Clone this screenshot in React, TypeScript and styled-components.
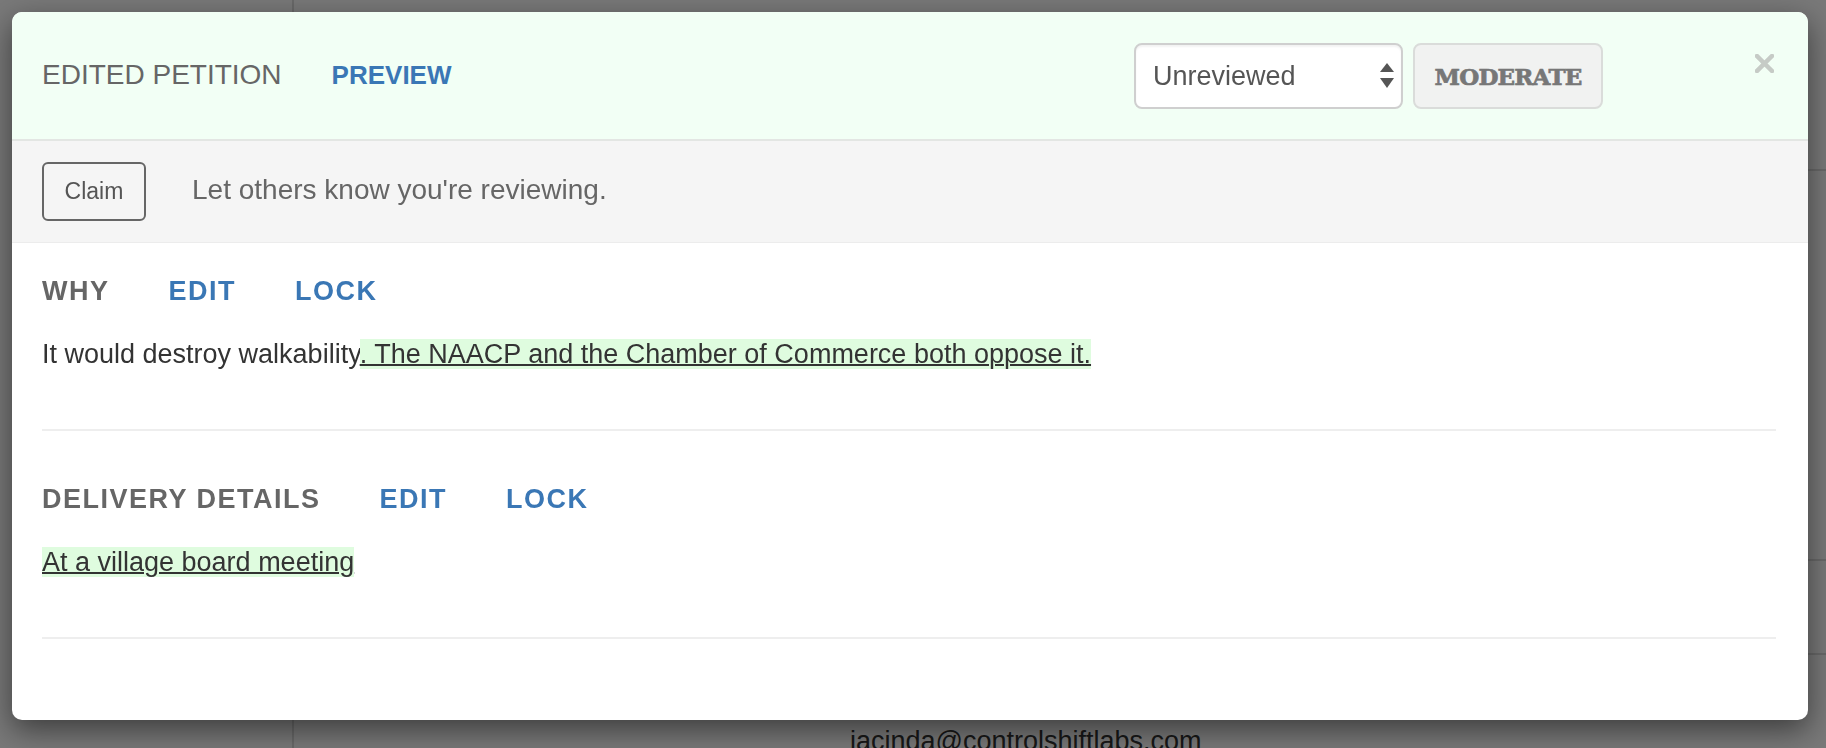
import React from "react";
import styled, { createGlobalStyle } from "styled-components";

const GlobalStyle = createGlobalStyle`
  html, body {
    margin: 0;
    padding: 0;
  }
  body {
    width: 1826px;
    height: 748px;
    overflow: hidden;
    background: #fff;
    font-family: "Liberation Sans", Arial, Helvetica, sans-serif;
  }
  * {
    box-sizing: border-box;
  }
`;

// page behind the dialog
const Page = styled.div`
  display: grid;
  grid-template-columns: 294px 1fr;
  height: 748px;
`;

const Sidebar = styled.aside`
  border-right: 2px solid #dedede;
`;

const Main = styled.main`
  display: flex;
  flex-direction: column;
`;

const TableRow = styled.div<{ $height?: number }>`
  flex: ${(p) => (p.$height ? `0 0 ${p.$height}px` : "1")};
  border-bottom: 2px solid #dedede;
  padding: 67px 0 0 556px;
  font-size: 27px;
  line-height: 38px;
  color: #333;
`;

// dialog
const Overlay = styled.div`
  position: fixed;
  inset: 0;
  background: rgba(0, 0, 0, 0.53);
  padding: 12px;
`;

const Modal = styled.div`
  width: 1796px;
  height: 708px;
  background: #fff;
  border-radius: 10px;
  box-shadow: 0 10px 30px rgba(0, 0, 0, 0.5);
  overflow: hidden;
  display: flex;
  flex-direction: column;
`;

const Header = styled.header`
  display: flex;
  align-items: center;
  padding: 31px 34px 30px 30px;
  background: #f2fff5;
  border-bottom: 2px solid #e3e6e3;
`;

const TitleGroup = styled.div`
  display: flex;
  align-items: baseline;
  gap: 50px;
  margin-bottom: 3px;
  flex: 1;
`;

const Title = styled.h4`
  margin: 0;
  font-size: 28px;
  line-height: 32px;
  font-weight: 400;
  color: #666;
`;

const PreviewLink = styled.a`
  font-size: 26px;
  line-height: 32px;
  font-weight: 700;
  color: #3a77b5;
  text-decoration: none;
`;

const SelectWrap = styled.div`
  position: relative;
  width: 269px;
  height: 66px;
`;

const Select = styled.select`
  appearance: none;
  width: 100%;
  height: 100%;
  border: 2px solid #cfcfcf;
  border-radius: 8px;
  background: #fff;
  box-shadow: inset 0 2px 2px rgba(0, 0, 0, 0.05);
  padding: 0 30px 0 17px;
  font-family: inherit;
  font-size: 27px;
  color: #555;
`;

const SelectArrows = styled.svg`
  position: absolute;
  right: 9px;
  top: 20px;
  pointer-events: none;
`;

const ModerateButton = styled.button`
  width: 190px;
  height: 66px;
  margin-left: 10px;
  background: #f1f2f1;
  border: 2px solid #dadcda;
  border-radius: 8px;
  font-family: "DejaVu Serif", serif;
  font-weight: 700;
  font-size: 23px;
  letter-spacing: -0.8px;
  color: #777;
  -webkit-text-stroke: 0.7px #777;
  padding: 0;
`;

const CloseButton = styled.button`
  align-self: flex-start;
  margin: 11px 0 0 152px;
  width: 19px;
  height: 19px;
  padding: 0;
  border: none;
  background: none;
  display: flex;
`;

const ClaimBar = styled.div`
  display: flex;
  align-items: center;
  padding: 21px 30px;
  background: #f5f5f5;
  border-bottom: 1px solid #ececec;
`;

const ClaimButton = styled.button`
  width: 104px;
  height: 59px;
  border: 2px solid #666;
  border-radius: 6px;
  background: transparent;
  font-family: inherit;
  font-size: 23px;
  color: #555;
  padding: 0;
`;

const ClaimHint = styled.span`
  margin: 0 0 3px 46px;
  font-size: 28px;
  line-height: 32px;
  color: #666;
`;

const Body = styled.div`
  padding: 0 32px 79px 30px;
`;

const Section = styled.section<{ $first?: boolean }>`
  padding: ${(p) => (p.$first ? 33 : 53)}px 0 56px;
  border-bottom: 2px solid #eee;
`;

const SectionHead = styled.div`
  display: flex;
  gap: 59px;
  font-size: 27px;
  line-height: 30px;
  font-weight: 700;
  letter-spacing: 1.5px;
`;

const HeadLabel = styled.span`
  color: #666;
`;

const HeadLink = styled.a`
  color: #3a77b5;
  text-decoration: none;
`;

const Content = styled.p`
  margin: 29px 0 0;
  font-size: 27px;
  line-height: 38px;
  color: #333;
`;

const Inserted = styled.ins`
  background: #dffcdf;
  text-decoration: underline;
  text-decoration-thickness: 2px;
  color: #333;
`;

const sections = [
  {
    label: "WHY",
    before: "It would destroy walkability",
    added: ". The NAACP and the Chamber of Commerce both oppose it.",
  },
  {
    label: "DELIVERY DETAILS",
    before: "",
    added: "At a village board meeting",
  },
];

export default function App() {
  return (
    <>
      <GlobalStyle />
      <Page>
        <Sidebar />
        <Main>
          <TableRow $height={171} />
          <TableRow $height={390} />
          <TableRow $height={94} />
          <TableRow>jacinda@controlshiftlabs.com</TableRow>
        </Main>
      </Page>
      <Overlay>
        <Modal>
          <Header>
            <TitleGroup>
              <Title>EDITED PETITION</Title>
              <PreviewLink href="#">PREVIEW</PreviewLink>
            </TitleGroup>
            <SelectWrap>
              <Select defaultValue="unreviewed">
                <option value="unreviewed">Unreviewed</option>
                <option value="approved">Approved</option>
                <option value="rejected">Rejected</option>
              </Select>
              <SelectArrows width="14" height="25" viewBox="0 0 14 25">
                <polygon points="7,0 14,9 0,9" fill="#555" />
                <polygon points="0,15 14,15 7,25" fill="#555" />
              </SelectArrows>
            </SelectWrap>
            <ModerateButton>MODERATE</ModerateButton>
            <CloseButton aria-label="Close">
              <svg width="19" height="19" viewBox="0 0 19 19">
                <path
                  d="M2 2 L17 17 M17 2 L2 17"
                  stroke="#c6cbc6"
                  strokeWidth="4.5"
                  strokeLinecap="square"
                />
              </svg>
            </CloseButton>
          </Header>
          <ClaimBar>
            <ClaimButton>Claim</ClaimButton>
            <ClaimHint>Let others know you're reviewing.</ClaimHint>
          </ClaimBar>
          <Body>
            {sections.map((s, i) => (
              <Section key={s.label} $first={i === 0}>
                <SectionHead>
                  <HeadLabel>{s.label}</HeadLabel>
                  <HeadLink href="#">EDIT</HeadLink>
                  <HeadLink href="#">LOCK</HeadLink>
                </SectionHead>
                <Content>
                  {s.before}
                  <Inserted>{s.added}</Inserted>
                </Content>
              </Section>
            ))}
          </Body>
        </Modal>
      </Overlay>
    </>
  );
}
